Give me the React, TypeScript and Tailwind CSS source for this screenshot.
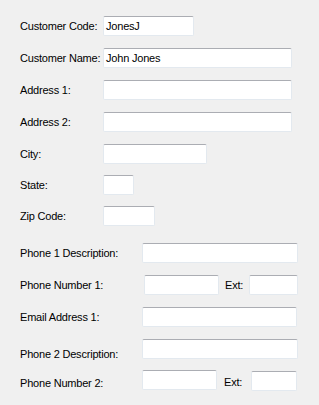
import React from "react";

const inputCls =
  "h-[20px] bg-white border border-[#e3e9ef] border-t-[#abadb3] rounded-[2px] px-[2px] text-[11px] leading-[18px] text-black";

function Row({
  top,
  label,
  labelW,
  inputW,
  value,
}: {
  top: string;
  label: string;
  labelW: string;
  inputW: string;
  value?: string;
}) {
  return (
    <div className={`flex items-center h-[20px] ${top}`}>
      <div className={`${labelW} shrink-0 whitespace-nowrap`}>{label}</div>
      <div className={`${inputCls} ${inputW}`}>{value}</div>
    </div>
  );
}

export default function App() {
  return (
    <div
      className="w-[319px] h-[405px] bg-[#f0f0f0] pl-[20px] pt-[16px] text-[11px] tracking-[-0.2px] text-black overflow-hidden"
      style={{ fontFamily: '"Liberation Sans", Arial, sans-serif' }}
    >
      <Row top="" label="Customer Code:" labelW="w-[83px]" inputW="w-[91px]" value="JonesJ" />
      <Row top="mt-[12px]" label="Customer Name:" labelW="w-[83px]" inputW="w-[189px]" value="John Jones" />
      <Row top="mt-[12px]" label="Address 1:" labelW="w-[83px]" inputW="w-[189px]" />
      <Row top="mt-[12px]" label="Address 2:" labelW="w-[83px]" inputW="w-[189px]" />
      <Row top="mt-[12px]" label="City:" labelW="w-[83px]" inputW="w-[104px]" />
      <Row top="mt-[11px]" label="State:" labelW="w-[83px]" inputW="w-[31px]" />
      <Row top="mt-[11px]" label="Zip Code:" labelW="w-[83px]" inputW="w-[52px]" />
      <Row top="mt-[17px]" label="Phone 1 Description:" labelW="w-[122px]" inputW="w-[156px]" />
      <div className="flex items-center h-[20px] mt-[12px]">
        <div className="w-[124px] shrink-0 whitespace-nowrap">Phone Number 1:</div>
        <div className={`${inputCls} w-[75px]`} />
        <div className="ml-[6px] w-[24px]">Ext:</div>
        <div className={`${inputCls} w-[49px]`} />
      </div>
      <Row top="mt-[12px]" label="Email Address 1:" labelW="w-[122px]" inputW="w-[155px]" />
      <div className="flex items-center h-[20px] mt-[12px]">
        <div className="w-[122px] shrink-0 whitespace-nowrap pt-[10px]">Phone 2 Description:</div>
        <div className={`${inputCls} w-[156px]`} />
      </div>
      <div className="flex items-center h-[20px] mt-[11px]">
        <div className="w-[122px] shrink-0 whitespace-nowrap pt-[7px]">Phone Number 2:</div>
        <div className={`${inputCls} w-[75px]`} />
        <div className="ml-[7px] w-[27px] pt-[5px]">Ext:</div>
        <div className={`${inputCls} w-[46px] mt-[2px]`} />
      </div>
    </div>
  );
}
